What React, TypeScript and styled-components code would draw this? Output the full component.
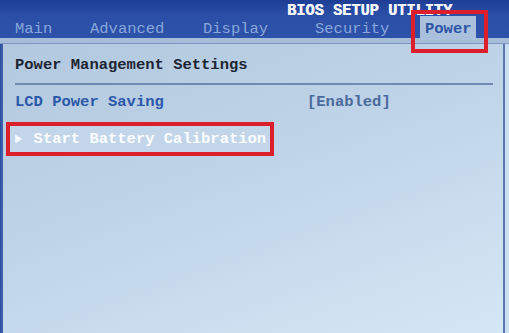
import React from "react";
import styled, { createGlobalStyle, css } from "styled-components";

const GlobalStyle = createGlobalStyle`
  html, body {
    margin: 0;
    padding: 0;
    background: #c4d9ec;
  }
  * {
    box-sizing: border-box;
  }
`;

const tabs = [
  { label: "Main", width: 75 },
  { label: "Advanced", width: 113 },
  { label: "Display", width: 112 },
  { label: "Security", width: 110 },
  { label: "Power", width: 56, active: true },
];

const App: React.FC = () => {
  return (
    <Screen>
      <GlobalStyle />
      <Header>
        <Title>BIOS SETUP UTILITY</Title>
        <TabBar>
          {tabs.map((t) => (
            <Tab key={t.label} $width={t.width} $active={t.active}>
              {t.label}
            </Tab>
          ))}
        </TabBar>
      </Header>
      <Strip />
      <Panel>
        <SectionTitle>Power Management Settings</SectionTitle>
        <Rule />
        <Row>
          <Label>LCD Power Saving</Label>
          <Value>[Enabled]</Value>
        </Row>
        <SelectedRow>
          <Arrow>▶</Arrow> Start Battery Calibration
        </SelectedRow>
      </Panel>
    </Screen>
  );
};

const mono = css`
  font-family: "Liberation Mono", "DejaVu Sans Mono", monospace;
  font-weight: bold;
  font-size: 15.5px;
  line-height: 18px;
  white-space: pre;
`;

// red annotation frame drawn over an element
const redFrame = (inset: string) => css`
  position: relative;
  &::after {
    content: "";
    position: absolute;
    inset: ${inset};
    border: 4px solid #dc1f2b;
    pointer-events: none;
    z-index: 2;
  }
`;

const Screen = styled.div`
  width: 509px;
  height: 333px;
  overflow: hidden;
  display: flex;
  flex-direction: column;
  background: #2c4fa6;
`;

const Header = styled.div`
  height: 38px;
  display: flex;
  flex-direction: column;
  background: linear-gradient(#1e3e95, #2b4fa7 40%, #2d52aa);
  position: relative;
  z-index: 1;
`;

const Title = styled.div`
  ${mono};
  color: #f4f6fb;
  font-size: 15.3px;
  line-height: 16px;
  height: 18px;
  padding: 2px 0 0 287px;
  transform: scaleY(1.1);
  text-shadow: 0.4px 0 0 #f4f6fb;
`;

const TabBar = styled.div`
  display: flex;
  height: 20px;
  padding-left: 10px;
`;

const Tab = styled.div<{ $width: number; $active?: boolean }>`
  ${mono};
  font-weight: normal;
  width: ${(p) => p.$width}px;
  padding: 2px 5px 0;
  color: #88a7da;
  ${(p) =>
    p.$active &&
    css`
      margin-top: -2px;
      padding-top: 4px;
      height: 24px;
      color: #2d55a6;
      font-weight: bold;
      background: #aac1dd;
      ${redFrame("-6px -12px -13px -9px")};
    `}
`;

const Strip = styled.div`
  height: 6px;
  background: #a6bcd9;
  border-bottom: 1px solid #7d96bf;
`;

const Panel = styled.div`
  flex: 1;
  margin-left: 1px;
  margin-right: 4px;
  border-left: 2px solid #3d5fab;
  border-right: 2px solid #5b79b0;
  padding: 12px 10px 0 12px;
  display: flex;
  flex-direction: column;
  background: linear-gradient(160deg, #b2c8de 0%, #bfd4e8 45%, #d3e7f5 100%);
  box-shadow: 4px 0 0 #c9def0;
`;

const SectionTitle = styled.div`
  ${mono};
  color: #1c2533;
`;

const Rule = styled.div`
  height: 2px;
  margin: 9px 0 8px;
  background: #7189b0;
`;

const Row = styled.div`
  display: flex;
  height: 18px;
`;

const Label = styled.span`
  ${mono};
  width: 292px;
  color: #2c58a8;
`;

const Value = styled.span`
  ${mono};
  color: #4b6a9c;
`;

const SelectedRow = styled.div`
  ${mono};
  height: 26px;
  margin-top: 15px;
  margin-left: -5px;
  align-self: flex-start;
  padding: 4px 4px 4px 5px;
  color: #fbfdff;
  background: #c2d5e9;
  ${redFrame("-4px")};
`;

const Arrow = styled.span`
  display: inline-block;
  width: 9.3px;
  font-family: "DejaVu Sans", sans-serif;
  font-size: 9px;
  line-height: 1;
  vertical-align: 2px;
  transform: scaleY(1.3);
  color: #f4f8fc;
`;

export default App;
